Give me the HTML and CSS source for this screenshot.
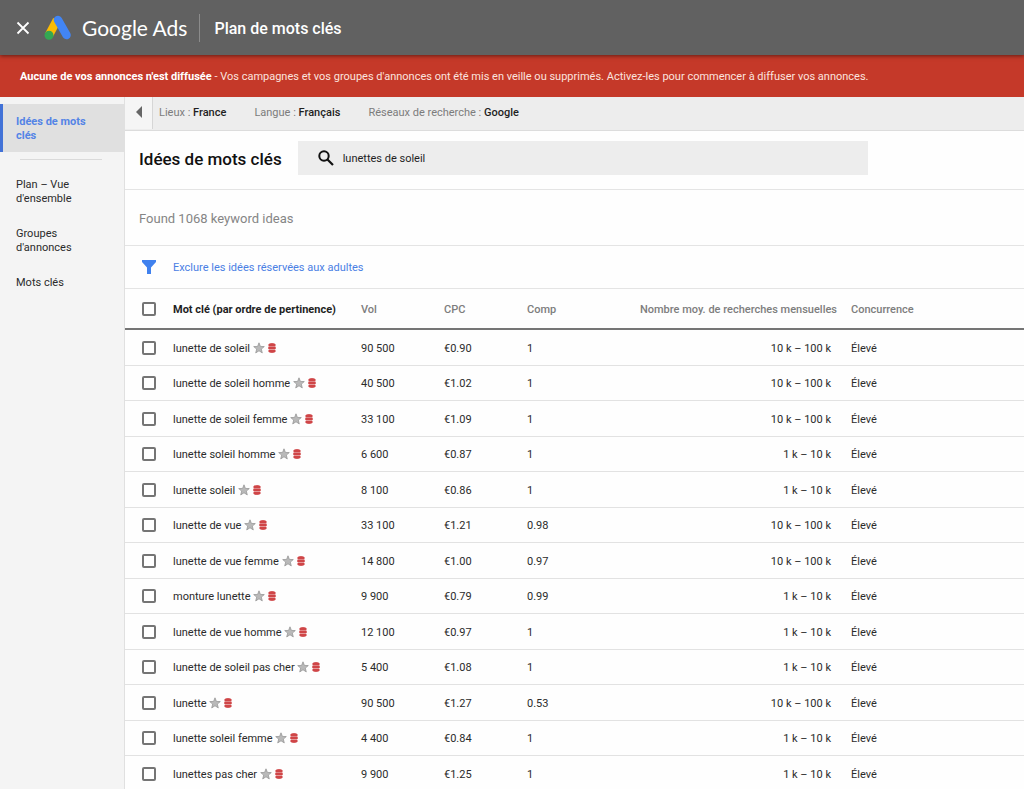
FILE: index.html
```html
<!DOCTYPE html>
<html lang="fr">
<head>
<meta charset="utf-8">
<title>Plan de mots clés - Google Ads</title>
<link rel="stylesheet" href="styles.css">
</head>
<body>
<svg class="sprite" aria-hidden="true">
  <symbol id="star" viewBox="0 0 12 12"><path d="M6 .8 7.4 4.4l3.9.2-3 2.5 1 3.8L6 8.800l-3.300 2.100 1-3.800-3-2.500 3.900-.2z" fill="#b9b9b9" stroke="#8e8e8e" stroke-width=".7"/></symbol>
  <symbol id="stack" viewBox="0 0 8 10"><path d="M.8 1C2 0 6 0 7.200 1v8C6 10 2 10 .8 9z" fill="#e59a9b"/><path d="M.8 1C2 0 6 0 7.200 1L7.700 2 7.200 3H.8L.3 2zM.3 3.800h7.400v2.300H.3zM.8 7h6.400l.5 1.100L7.200 9C6 10 2 10 .8 9L.3 8.100z" fill="#cf4547"/></symbol>
</svg>
<header class="topbar">
  <button class="close" aria-label="Fermer"><svg width="14" height="14" viewBox="0 0 14 14"><path d="M1.5 1.5l11 11M12.500 1.500l-11 11" stroke="#fff" stroke-width="1.800"/></svg></button>
  <svg class="logo" width="28" height="26" viewBox="0 0 28 26" aria-hidden="true">
    <path d="M5 20 13 5" stroke="#fbbc04" stroke-width="8.500"/>
    <path d="M14 5 22.500 20" stroke="#4285f4" stroke-width="8.500" stroke-linecap="round"/>
    <circle cx="5" cy="20.300" r="4.500" fill="#34a853"/>
  </svg>
  <span class="brand">Google Ads</span>
  <span class="product">Plan de mots clés</span>
</header>
<div class="alert" role="alert"><p><strong>Aucune de vos annonces n'est diffusée</strong> - Vos campagnes et vos groupes d'annonces ont été mis en veille ou supprimés. Activez-les pour commencer à diffuser vos annonces.</p></div>
<div class="layout">
  <nav class="sidebar">
    <a class="nav-item active" href="#">Idées de mots clés</a>
    <hr class="nav-rule">
    <a class="nav-item" href="#">Plan – Vue d'ensemble</a>
    <a class="nav-item" href="#">Groupes d'annonces</a>
    <a class="nav-item" href="#">Mots clés</a>
  </nav>
  <main class="content">
    <div class="context">
      <button class="collapse" aria-label="Réduire le menu"><svg width="6" height="12" viewBox="0 0 6 12"><path d="M6 0v12L0 6z" fill="#666"/></svg></button>
      <span class="setting">Lieux : <b>France</b></span>
      <span class="setting">Langue : <b>Français</b></span>
      <span class="setting">Réseaux de recherche : <b>Google</b></span>
    </div>
    <div class="heading">
      <h1 class="title">Idées de mots clés</h1>
      <label class="search">
        <svg width="16" height="16" viewBox="0 0 16 16" aria-hidden="true"><circle cx="6" cy="6" r="4.700" fill="none" stroke="#111" stroke-width="2"/><path d="M9.500 9.500l5.500 5.500" stroke="#111" stroke-width="2.200"/></svg>
        <input class="search-input" type="text" value="lunettes de soleil" aria-label="Rechercher des mots clés">
      </label>
    </div>
    <p class="found">Found 1068 keyword ideas</p>
    <div class="filter">
      <svg width="16" height="14" viewBox="0 0 16 14" aria-hidden="true"><path d="M1 0h14v2l-5 5.500V14H6V7.500L1 2z" fill="#4081ee"/></svg>
      <a class="filter-link" href="#">Exclure les idées réservées aux adultes</a>
    </div>
    <table class="keywords">
      <colgroup><col class="c-check"><col class="c-name"><col class="c-num"><col class="c-num"><col class="c-num"><col class="c-search"><col></colgroup>
      <thead><tr><th><input type="checkbox" class="check" aria-label="Tout sélectionner"></th><th class="sorted">Mot clé (par ordre de pertinence)</th><th>Vol</th><th>CPC</th><th>Comp</th><th class="right">Nombre moy. de recherches mensuelles</th><th>Concurrence</th></tr></thead>
      <tbody>
        <tr><td><input type="checkbox" class="check" aria-label="lunette de soleil"></td><td>lunette de soleil <svg class="star"><use href="#star"/></svg><svg class="stack"><use href="#stack"/></svg></td><td>90 500</td><td>€0.90</td><td>1</td><td class="right">10 k – 100 k</td><td>Élevé</td></tr>
        <tr><td><input type="checkbox" class="check" aria-label="lunette de soleil homme"></td><td>lunette de soleil homme <svg class="star"><use href="#star"/></svg><svg class="stack"><use href="#stack"/></svg></td><td>40 500</td><td>€1.02</td><td>1</td><td class="right">10 k – 100 k</td><td>Élevé</td></tr>
        <tr><td><input type="checkbox" class="check" aria-label="lunette de soleil femme"></td><td>lunette de soleil femme <svg class="star"><use href="#star"/></svg><svg class="stack"><use href="#stack"/></svg></td><td>33 100</td><td>€1.09</td><td>1</td><td class="right">10 k – 100 k</td><td>Élevé</td></tr>
        <tr><td><input type="checkbox" class="check" aria-label="lunette soleil homme"></td><td>lunette soleil homme <svg class="star"><use href="#star"/></svg><svg class="stack"><use href="#stack"/></svg></td><td>6 600</td><td>€0.87</td><td>1</td><td class="right">1 k – 10 k</td><td>Élevé</td></tr>
        <tr><td><input type="checkbox" class="check" aria-label="lunette soleil"></td><td>lunette soleil <svg class="star"><use href="#star"/></svg><svg class="stack"><use href="#stack"/></svg></td><td>8 100</td><td>€0.86</td><td>1</td><td class="right">1 k – 10 k</td><td>Élevé</td></tr>
        <tr><td><input type="checkbox" class="check" aria-label="lunette de vue"></td><td>lunette de vue <svg class="star"><use href="#star"/></svg><svg class="stack"><use href="#stack"/></svg></td><td>33 100</td><td>€1.21</td><td>0.98</td><td class="right">10 k – 100 k</td><td>Élevé</td></tr>
        <tr><td><input type="checkbox" class="check" aria-label="lunette de vue femme"></td><td>lunette de vue femme <svg class="star"><use href="#star"/></svg><svg class="stack"><use href="#stack"/></svg></td><td>14 800</td><td>€1.00</td><td>0.97</td><td class="right">10 k – 100 k</td><td>Élevé</td></tr>
        <tr><td><input type="checkbox" class="check" aria-label="monture lunette"></td><td>monture lunette <svg class="star"><use href="#star"/></svg><svg class="stack"><use href="#stack"/></svg></td><td>9 900</td><td>€0.79</td><td>0.99</td><td class="right">1 k – 10 k</td><td>Élevé</td></tr>
        <tr><td><input type="checkbox" class="check" aria-label="lunette de vue homme"></td><td>lunette de vue homme <svg class="star"><use href="#star"/></svg><svg class="stack"><use href="#stack"/></svg></td><td>12 100</td><td>€0.97</td><td>1</td><td class="right">1 k – 10 k</td><td>Élevé</td></tr>
        <tr><td><input type="checkbox" class="check" aria-label="lunette de soleil pas cher"></td><td>lunette de soleil pas cher <svg class="star"><use href="#star"/></svg><svg class="stack"><use href="#stack"/></svg></td><td>5 400</td><td>€1.08</td><td>1</td><td class="right">1 k – 10 k</td><td>Élevé</td></tr>
        <tr><td><input type="checkbox" class="check" aria-label="lunette"></td><td>lunette <svg class="star"><use href="#star"/></svg><svg class="stack"><use href="#stack"/></svg></td><td>90 500</td><td>€1.27</td><td>0.53</td><td class="right">10 k – 100 k</td><td>Élevé</td></tr>
        <tr><td><input type="checkbox" class="check" aria-label="lunette soleil femme"></td><td>lunette soleil femme <svg class="star"><use href="#star"/></svg><svg class="stack"><use href="#stack"/></svg></td><td>4 400</td><td>€0.84</td><td>1</td><td class="right">1 k – 10 k</td><td>Élevé</td></tr>
        <tr><td><input type="checkbox" class="check" aria-label="lunettes pas cher"></td><td>lunettes pas cher <svg class="star"><use href="#star"/></svg><svg class="stack"><use href="#stack"/></svg></td><td>9 900</td><td>€1.25</td><td>1</td><td class="right">1 k – 10 k</td><td>Élevé</td></tr>
      </tbody>
    </table>
  </main>
</div>
</body>
</html>
```

FILE: styles.css
```css
* { box-sizing: border-box; }
body {
  margin: 0;
  min-height: 100vh;
  display: flex;
  flex-direction: column;
  font-family: Roboto, "Liberation Sans", sans-serif;
  font-size: 11px;
  line-height: 14px;
  color: #2b2b2b;
  background: #fefefe;
}
a { text-decoration: none; color: inherit; }
button { border: 0; padding: 0; background: none; cursor: pointer; }
svg { display: block; flex: none; }
.sprite { display: none; }

.topbar {
  position: relative;
  display: flex;
  align-items: center;
  height: 55px;
  padding-left: 16px;
  background: #616161;
  color: #fff;
  box-shadow: 0 1px 4px rgba(0, 0, 0, .5);
}
.close { width: 14px; height: 14px; }
.logo { margin-left: 14px; }
.brand {
  margin-left: 10px;
  padding-right: 12px;
  font: 21px/28px Lato, sans-serif;
  border-right: 1px solid #8b8b8b;
}
.product { margin-left: 14px; padding-top: 2px; font-size: 16px; font-weight: 500; line-height: 20px; }

.alert {
  display: flex;
  align-items: center;
  min-height: 42px;
  padding: 2px 20px 0;
  background: #c53929;
  color: #fbe3df;
}
.alert p { margin: 0; }
.alert strong { color: #fff; font-weight: 700; }

.layout { display: flex; flex: 1; }
.sidebar {
  flex: none;
  width: 125px;
  padding-top: 7px;
  background: #f4f4f4;
  border-right: 1px solid #e0e0e0;
}
.nav-item { display: block; padding: 10px 24px 10px 16px; margin-bottom: 1px; }
.nav-item.active {
  margin: 0;
  padding: 11px 24px 9px 13px;
  border-left: 3px solid #4272d7;
  background: #e0e0e0;
  color: #5484e6;
  font-weight: 700;
}
.nav-rule { height: 1px; margin: 7px 22px 8px 20px; border: 0; background: #dadada; }

.content { flex: 1; min-width: 0; }
.context {
  display: flex;
  height: 34px;
  padding-bottom: 1px;
  align-items: center;
  gap: 28px;
  background: #ededed;
  border-bottom: 1px solid #dcdcdc;
  color: #7c7c7c;
}
.context b { color: #1f1f1f; font-weight: 500; }
.collapse {
  display: flex;
  align-items: center;
  justify-content: center;
  width: 28px;
  height: 32px;
  margin-right: -22px;
  padding-bottom: 2px;
  background: #f5f5f5;
  border-right: 1px solid #d6d6d6;
}
.heading {
  display: flex;
  align-items: center;
  gap: 16px;
  padding: 10px 156px 14px 14px;
  border-bottom: 1px solid #e4e4e4;
}
.title { margin: 0; padding-top: 2px; font-size: 17px; font-weight: 500; line-height: 20px; color: #111; }
.search {
  display: flex;
  flex: 1;
  align-items: center;
  gap: 9px;
  height: 34px;
  padding-left: 20px;
  background: #ededed;
}
.search-input {
  flex: 1;
  border: 0;
  padding: 2px 0 0;
  background: none;
  font: inherit;
  color: #1f1f1f;
}
.found {
  margin: 0;
  padding: 21px 14px 18px;
  font-size: 13px;
  line-height: 16px;
  color: #858585;
  border-bottom: 1px solid #e4e4e4;
}
.filter {
  display: flex;
  align-items: center;
  gap: 16px;
  height: 43px;
  padding-left: 16px;
  border-bottom: 1px solid #e4e4e4;
}
.filter-link { padding-top: 2px; color: #4a80e4; }

.keywords { width: 100%; table-layout: fixed; border-collapse: separate; border-spacing: 0; }
.c-check { width: 48px; }
.c-name { width: 188px; }
.c-num { width: 83px; }
.c-search { width: 241px; }
.keywords th, .keywords td { padding: 2px 0 0; text-align: left; white-space: nowrap; vertical-align: middle; }
.keywords th:first-child, .keywords td:first-child { padding: 0; }
.keywords th { height: 41px; font-weight: 500; color: #7d7d7d; border-bottom: 2px solid #757575; }
.keywords .sorted { font-weight: 700; color: #1f1f1f; }
.keywords td { height: 35px; border-bottom: 1px solid #e2e2e2; }
.keywords tr:nth-child(odd) td { height: 36px; }
.keywords th.right { text-align: right; padding-right: 14px; }
.keywords td.right { text-align: right; padding-right: 20px; }
.check {
  appearance: none;
  display: block;
  width: 14px;
  height: 14px;
  margin: 0 0 0 17px;
  border: 2px solid #757575;
  border-radius: 2px;
  background: #fff;
}
.star, .stack { display: inline-block; }
.star { width: 12px; height: 12px; margin-right: 3px; vertical-align: -2px; }
.stack { width: 8px; height: 10px; vertical-align: -1px; }
```
